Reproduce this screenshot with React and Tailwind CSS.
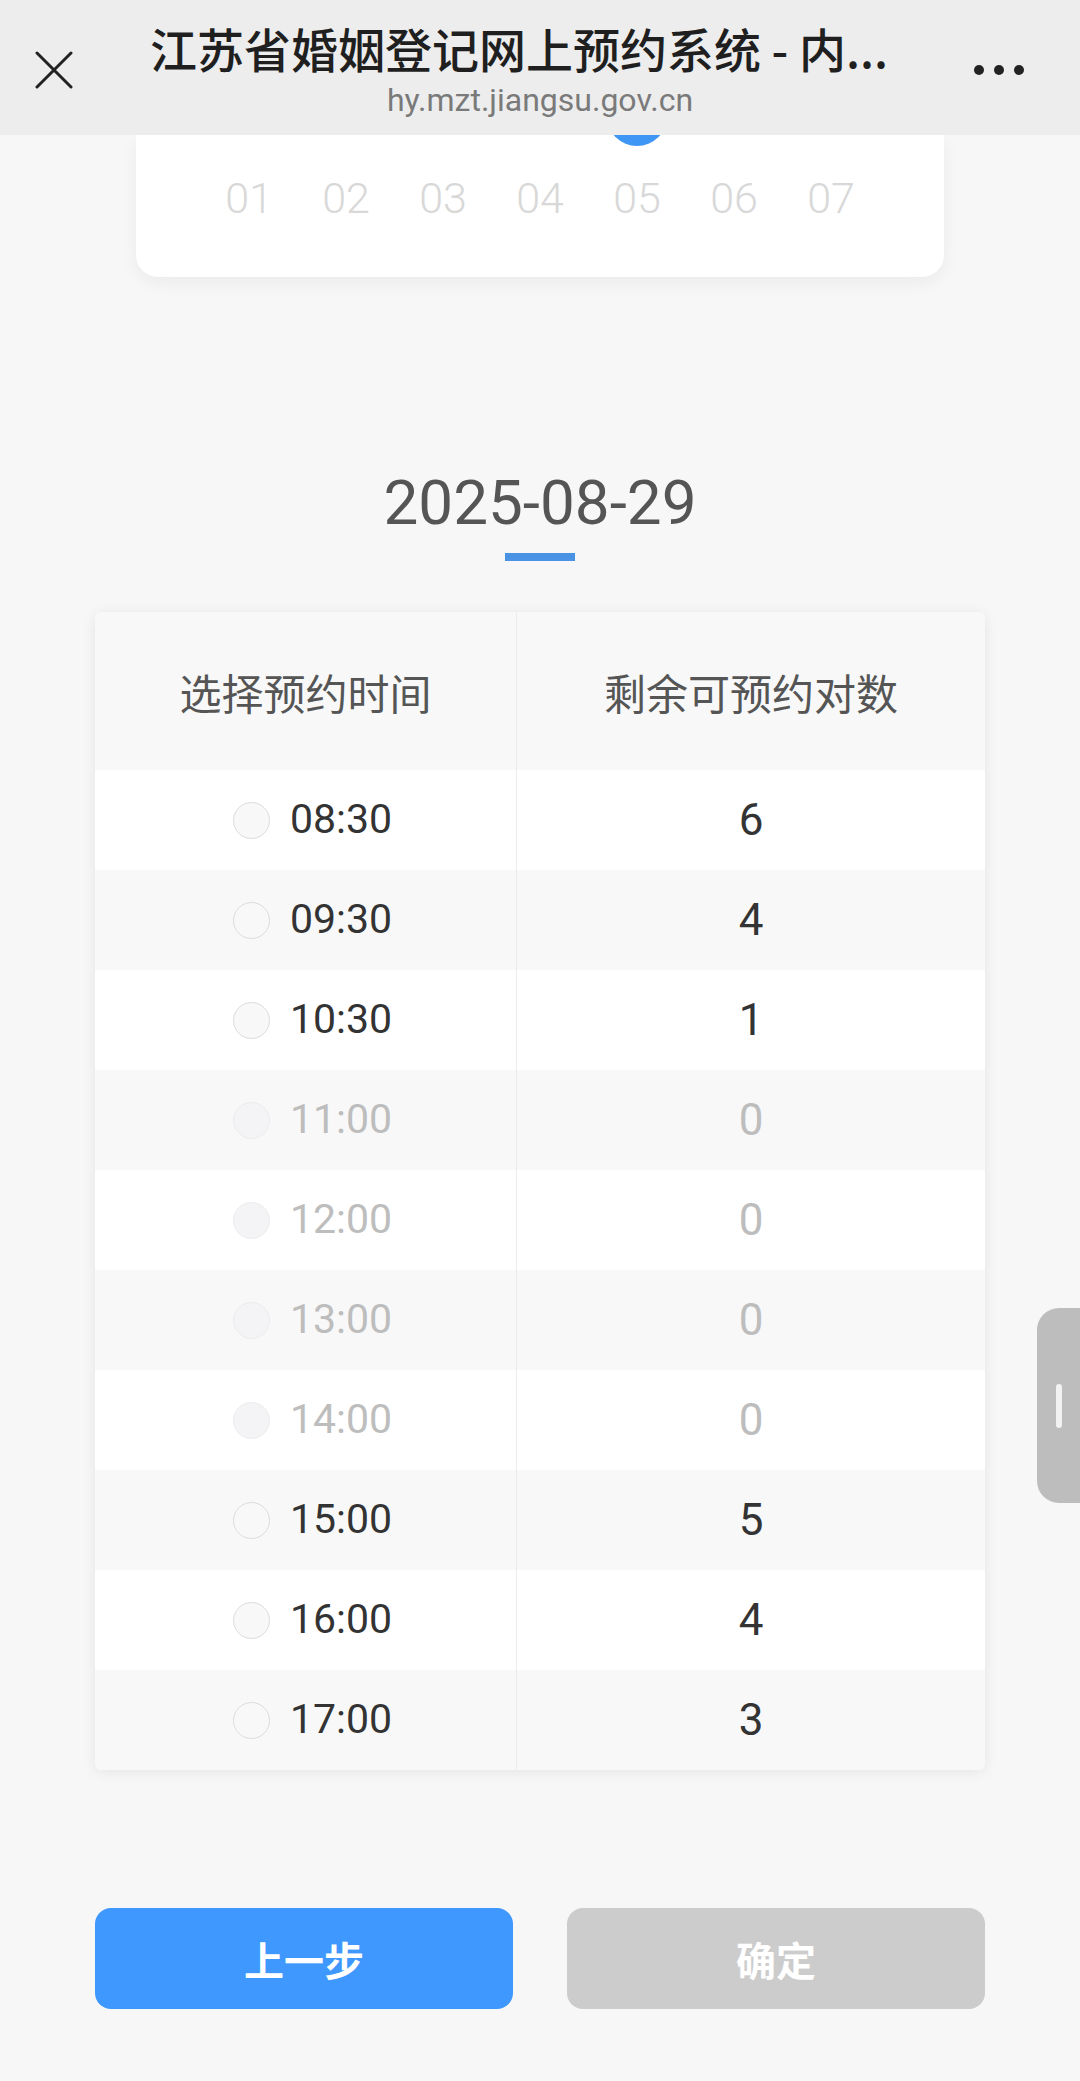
import React from 'react';

const slots = [
  { time: '08:30', left: 6 },
  { time: '09:30', left: 4 },
  { time: '10:30', left: 1 },
  { time: '11:00', left: 0 },
  { time: '12:00', left: 0 },
  { time: '13:00', left: 0 },
  { time: '14:00', left: 0 },
  { time: '15:00', left: 5 },
  { time: '16:00', left: 4 },
  { time: '17:00', left: 3 },
];

const days = ['01', '02', '03', '04', '05', '06', '07'];

const TopBar = () => (
  <div className="relative z-10 h-[135px] bg-[#ededed] flex">
    <div className="w-[108px] flex items-center justify-center pt-[4px]">
      <svg width="38" height="38" viewBox="0 0 38 38" fill="none">
        <path d="M2 2 L36 36 M36 2 L2 36" stroke="#222" strokeWidth="3" strokeLinecap="round" />
      </svg>
    </div>
    <div className="flex-1 flex flex-col items-center pt-[19px]">
      <div className="mr-[42px] text-[47px] leading-[58px] font-medium text-[#1f1f1f] whitespace-nowrap font-['Noto_Sans_CJK_SC',sans-serif]">
        江苏省婚姻登记网上预约系统 - 内...
      </div>
      <div className="mt-[5px] text-[32px] leading-[36px] text-[#7a7a7a] font-['Roboto',sans-serif]">
        hy.mzt.jiangsu.gov.cn
      </div>
    </div>
    <div className="w-[108px] flex items-center justify-start gap-[10px] pt-[4px] pl-[2px]">
      <span className="w-[10px] h-[10px] rounded-full bg-[#222]" />
      <span className="w-[10px] h-[10px] rounded-full bg-[#222]" />
      <span className="w-[10px] h-[10px] rounded-full bg-[#222]" />
    </div>
  </div>
);

const WeekCard = () => (
  <div className="mx-[136px] bg-white rounded-b-[22px] overflow-hidden shadow-[0_6px_18px_rgba(0,0,0,0.05)] flex justify-center pb-[57px]">
    {days.map((d) => (
      <div key={d} className="w-[97px] flex flex-col items-center">
        <div className={`w-[60px] h-[60px] -mt-[49px] rounded-full ${d === '05' ? 'bg-[#4096f5]' : 'bg-transparent'}`} />
        <div className="mt-[30px] text-[43px] leading-[44px] font-light text-[#d8d8d8] font-['Roboto',sans-serif]">
          {d}
        </div>
      </div>
    ))}
  </div>
);

const Radio = ({ off }) => (
  <span
    className={`w-[37px] h-[37px] rounded-full border-[1.5px] ${off ? 'border-[#ececec] bg-[#f4f4f7]' : 'border-[#dcdcdc] bg-[#f8f8f8]'}`}
  />
);

const SlotTable = () => (
  <div className="mx-[95px] mt-[51px] rounded-[6px] overflow-hidden shadow-[0_2px_14px_rgba(0,0,0,0.08)] font-['Roboto','Noto_Sans_CJK_SC',sans-serif]">
    <div className="flex h-[158px] bg-[#f8f8f8] text-[42px] text-[#555] font-['Noto_Sans_CJK_SC',sans-serif]">
      <div className="w-[422px] border-r border-[#ececec] flex items-center justify-center">选择预约时间</div>
      <div className="flex-1 flex items-center justify-center">剩余可预约对数</div>
    </div>
    {slots.map((s, i) => {
      const off = s.left === 0;
      return (
        <div key={s.time} className={`flex h-[100px] ${i % 2 === 0 ? 'bg-white' : 'bg-[#f8f8f8]'}`}>
          <div className="w-[422px] border-r border-[#ececec] flex items-center justify-center gap-[20px] pl-[14px]">
            <Radio off={off} />
            <span className={`text-[41px] ${off ? 'text-[#bdbdbd]' : 'text-[#333]'}`}>{s.time}</span>
          </div>
          <div className={`flex-1 flex items-center justify-center text-[44px] ${off ? 'text-[#bdbdbd]' : 'text-[#333]'}`}>
            {s.left}
          </div>
        </div>
      );
    })}
  </div>
);

export default function App() {
  return (
    <div className="relative w-[1080px] h-[2081px] bg-[#f7f7f7] overflow-hidden">
      <TopBar />
      <WeekCard />

      <div className="mt-[195px] flex flex-col items-center">
        <div className="text-[62px] leading-[62px] text-[#555] font-['Roboto',sans-serif]">2025-08-29</div>
        <div className="mt-[19px] w-[70px] h-[8px] bg-[#4a92e3]" />
      </div>

      <SlotTable />

      <div className="mx-[95px] mt-[138px] flex gap-[54px] font-['Noto_Sans_CJK_SC',sans-serif]">
        <button className="flex-1 h-[101px] rounded-[16px] bg-[#3f98fd] text-white text-[40px] font-bold">上一步</button>
        <button className="flex-1 h-[101px] rounded-[16px] bg-[#cccccc] text-white text-[40px] font-bold">确定</button>
      </div>

      <div className="absolute right-0 top-[1308px] w-[43px] h-[195px] rounded-l-[22px] bg-[#bdbdbd] flex items-center pl-[19px]">
        <span className="w-[6px] h-[44px] rounded-full bg-white/80" />
      </div>
    </div>
  );
}
